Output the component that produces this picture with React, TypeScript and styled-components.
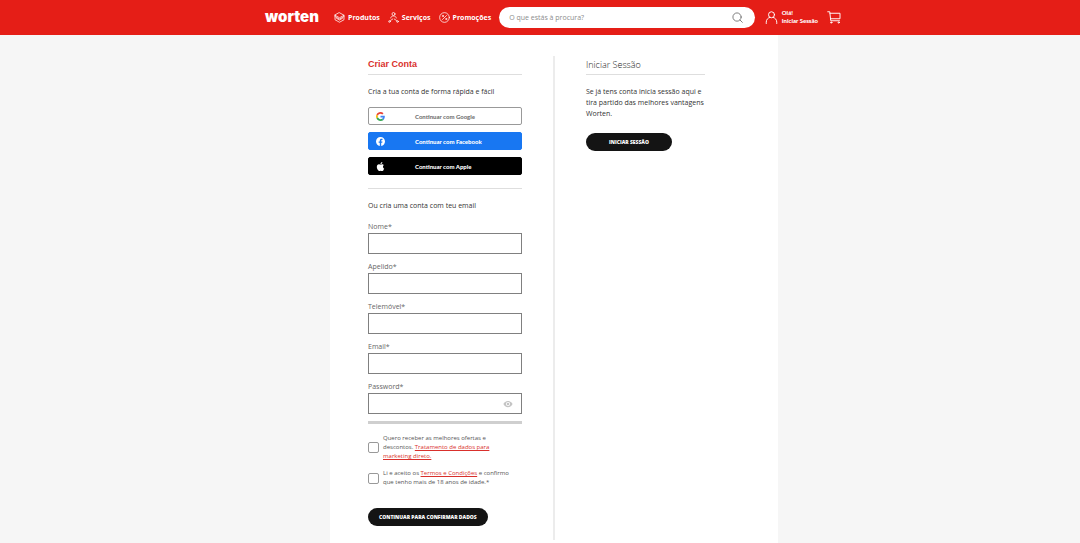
import React from "react";
import styled, { createGlobalStyle, css } from "styled-components";

const GlobalStyle = createGlobalStyle`
  * { box-sizing: border-box; }
  body {
    margin: 0;
    background: #f6f6f6;
    color: #333;
    font-family: "Open Sans", "Noto Sans", sans-serif;
    font-size: 7px;
    line-height: 11px;
  }
  h1, h2, p { margin: 0; }
  button, input { font-family: inherit; }
`;

const Page = styled.div`
  min-height: 100vh;
  display: flex;
  flex-direction: column;
`;

const Header = styled.header`
  background: #e51e17;
  color: #fff;
  padding-left: 28px;
`;

const HeaderInner = styled.div`
  display: flex;
  align-items: center;
  max-width: 578px;
  height: 35px;
  margin: 0 auto;
  padding: 0 2px 1px 0;
`;

const Logo = styled.a`
  width: 55px;
  margin-right: 14px;
  color: #fff;
  font-family: Inter, sans-serif;
  font-size: 15px;
  font-weight: 900;
  line-height: 20px;
  text-decoration: none;
`;

const Nav = styled.nav`
  display: flex;
  gap: 8px;
`;

const NavLink = styled.a`
  display: flex;
  align-items: center;
  gap: 3px;
  color: #fff;
  font-weight: 700;
  text-decoration: none;
`;

const Icon = styled.svg<{ $size: number }>`
  flex: none;
  display: block;
  width: ${(p) => p.$size}px;
  height: ${(p) => p.$size}px;
`;

const Search = styled.form`
  flex: 1;
  display: flex;
  align-items: center;
  height: 21px;
  margin-left: 8px;
  padding: 0 12px 0 10px;
  border-radius: 11px;
  background: #fff;
`;

const SearchInput = styled.input`
  flex: 1;
  min-width: 0;
  padding: 0;
  border: 0;
  outline: 0;
  background: transparent;
  font-size: 7px;
  &::placeholder { color: #8c8c8c; }
`;

const IconButton = styled.button`
  display: flex;
  padding: 0;
  border: 0;
  background: none;
  cursor: pointer;
`;

const compactBold = css`
  font-family: Lato, "Open Sans", sans-serif;
  font-size: 6px;
  font-weight: 900;
`;

const Account = styled.a`
  ${compactBold}
  display: flex;
  align-items: center;
  gap: 4px;
  margin: 0 9px 0 10px;
  color: #fff;
  line-height: 8px;
  white-space: nowrap;
  text-decoration: none;
`;

const Main = styled.main`
  flex: 1;
  display: flex;
  padding-left: 28px;
`;

const Panel = styled.div`
  display: grid;
  grid-template-columns: 1fr 1fr;
  align-items: start;
  width: 100%;
  max-width: 448px;
  margin: 0 auto;
  padding: 21px 36px 3px 38px;
  background: #fff;
`;

const SignUp = styled.section`
  padding: 0 31px 14px 0;
  border-right: 2px solid #ececec;
`;

const SignIn = styled.section`
  padding: 0 37px 0 31px;
`;

const titleBase = css`
  border-bottom: 1px solid #dedede;
  font-size: 9px;
`;

const SignUpTitle = styled.h1`
  ${titleBase}
  padding-bottom: 2px;
  color: #d9302c;
  font-family: "Liberation Sans", Arial, sans-serif;
  font-weight: 700;
  line-height: 16px;
`;

const SignInTitle = styled.h2`
  ${titleBase}
  color: #222;
  font-weight: 300;
  line-height: 18px;
`;

const Lead = styled.p`
  margin-top: 11px;
`;

const SocialList = styled.div`
  display: grid;
  gap: 7px;
  margin-top: 10px;
  padding-bottom: 13px;
  border-bottom: 1px solid #dedede;
`;

const SocialButton = styled.button<{ $bg: string; $fg: string; $border: string }>`
  ${compactBold}
  display: grid;
  grid-template-columns: 10px 1fr;
  align-items: center;
  gap: 29px;
  height: 18px;
  padding: 0 7px;
  border: 1px solid ${(p) => p.$border};
  border-radius: 2px;
  background: ${(p) => p.$bg};
  color: ${(p) => p.$fg};
  text-align: left;
  cursor: pointer;
`;

const Fields = styled.div`
  display: grid;
  gap: 7px;
  margin-top: 10px;
`;

const Field = styled.div`
  display: flex;
  flex-direction: column;
`;

const Label = styled.label`
  color: #666;
  line-height: 12px;
`;

const InputBox = styled.div`
  display: flex;
  align-items: center;
  height: 21px;
  padding: 0 8px;
  border: 1px solid #808080;
  background: #fff;
`;

const Input = styled.input`
  flex: 1;
  min-width: 0;
  padding: 0;
  border: 0;
  outline: 0;
  background: transparent;
  font-size: 7px;
`;

const Strength = styled.div`
  height: 3px;
  background: #cfcfcf;
`;

const Consents = styled.div`
  display: grid;
  gap: 8px;
  margin-top: 10px;
`;

const Consent = styled.div`
  display: flex;
  align-items: center;
  gap: 4px;
  padding-right: 5px;
  color: #555;
  font-size: 6px;
  line-height: 9px;
  a { color: #d9302c; }
`;

const Checkbox = styled.input`
  appearance: none;
  flex: none;
  width: 11px;
  height: 11px;
  margin: 0;
  border: 1px solid #999;
  border-radius: 2px;
  background: #fff;
  &:checked { background: #d9302c; }
`;

const PillButton = styled.button<{ $top: number; $side: number }>`
  display: block;
  height: 18px;
  margin-top: ${(p) => p.$top}px;
  padding: 0 ${(p) => p.$side}px;
  border: 0;
  border-radius: 9px;
  background: #141414;
  color: #fff;
  font-size: 5px;
  font-weight: 800;
  white-space: nowrap;
  cursor: pointer;
`;

const line = { fill: "none", stroke: "currentColor", strokeLinecap: "round", strokeLinejoin: "round" } as const;

const BoxIcon = () => (
  <Icon $size={11} viewBox="0 0 22 22" {...line} strokeWidth="1.5" aria-hidden>
    <path d="M11 1.500 20 6.500 11 11.500 2 6.500Z M2 6.500V15.500L11 20.500 20 15.500V6.500 M2 9 11 14 20 9 M5 12.500 11 16 17 12.500" />
  </Icon>
);

const ServicesIcon = () => (
  <Icon $size={11} viewBox="0 0 22 22" {...line} strokeWidth="1.5" aria-hidden>
    <circle cx="11" cy="4" r="3" />
    <path d="M5.500 12c.5-3 2.500-4 5.500-4s5 1 5.500 4M9.500 14 5 17M12.500 14 17 17" />
    <circle cx="3" cy="19" r="1.700" />
    <circle cx="19" cy="19" r="1.700" />
  </Icon>
);

const PromoIcon = () => (
  <Icon $size={11} viewBox="0 0 22 22" {...line} strokeWidth="1.5" aria-hidden>
    <circle cx="11" cy="11" r="9.700" />
    <path d="M7 15 15 7" />
    <circle cx="7.700" cy="8" r="1.200" />
    <circle cx="14.300" cy="14" r="1.200" />
  </Icon>
);

const SearchIcon = () => (
  <Icon $size={11} viewBox="0 0 24 24" {...line} stroke="#666" strokeWidth="1.800" aria-hidden>
    <circle cx="11" cy="11" r="9" />
    <path d="m17.500 17.500 5 5" />
  </Icon>
);

const UserIcon = () => (
  <Icon $size={13} viewBox="0 0 26 26" {...line} strokeWidth="1.900" aria-hidden>
    <circle cx="13" cy="7.500" r="6" />
    <path d="M2.500 25v-2.500c0-5 3-8.500 7-9.700M23.500 25v-2.500c0-5-3-8.500-7-9.700" />
  </Icon>
);

const CartIcon = () => (
  <Icon $size={14} viewBox="0 0 28 28" {...line} strokeWidth="1.900" aria-hidden>
    <path d="M1.500 3.500H5.500L7.500 21.500H25M6 6.500H26V17.500H7.300" />
    <circle cx="8.500" cy="25" r="1.300" />
    <circle cx="23.500" cy="25" r="1.300" />
  </Icon>
);

const GoogleIcon = () => (
  <Icon $size={9} viewBox="0 0 48 48" aria-hidden>
    <path fill="#EA4335" d="M24 9.500c3.540 0 6.710 1.220 9.210 3.600l6.850-6.850C35.900 2.380 30.470 0 24 0 14.620 0 6.510 5.380 2.560 13.220l7.980 6.190C12.430 13.720 17.740 9.500 24 9.500z" />
    <path fill="#4285F4" d="M46.980 24.550c0-1.570-.15-3.090-.38-4.550H24v9.020h12.940c-.58 2.960-2.260 5.480-4.780 7.180l7.730 6c4.510-4.180 7.090-10.360 7.090-17.650z" />
    <path fill="#FBBC05" d="M10.530 28.590c-.48-1.450-.76-2.990-.76-4.590s.27-3.140.76-4.590l-7.980-6.190C.92 16.460 0 20.120 0 24c0 3.880.92 7.540 2.560 10.780l7.970-6.190z" />
    <path fill="#34A853" d="M24 48c6.480 0 11.930-2.130 15.890-5.810l-7.730-6c-2.150 1.450-4.920 2.300-8.160 2.300-6.260 0-11.570-4.220-13.470-9.910l-7.980 6.190C6.510 42.620 14.620 48 24 48z" />
  </Icon>
);

const FacebookIcon = () => (
  <Icon $size={9} viewBox="0 0 24 24" fill="#fff" aria-hidden>
    <path d="M24 12.070C24 5.410 18.630 0 12 0S0 5.410 0 12.070C0 18.100 4.390 23.090 10.130 24v-8.440H7.080v-3.490h3.050V9.410c0-3.020 1.790-4.690 4.530-4.690 1.310 0 2.690.24 2.690.24v2.970h-1.520c-1.490 0-1.960.93-1.960 1.890v2.250h3.330l-.53 3.490h-2.800V24C19.610 23.090 24 18.100 24 12.070z" />
  </Icon>
);

const AppleIcon = () => (
  <Icon $size={9} viewBox="0 0 24 24" fill="#fff" aria-hidden>
    <path d="M12.150 6.900c-.95 0-2.420-1.080-3.960-1.040-2.040.03-3.910 1.180-4.960 3.010-2.120 3.680-.55 9.100 1.520 12.090 1.010 1.450 2.210 3.090 3.790 3.040 1.520-.07 2.090-.99 3.940-.99 1.830 0 2.350.99 3.960.95 1.640-.03 2.680-1.480 3.680-2.950 1.160-1.690 1.640-3.320 1.660-3.410-.04-.01-3.180-1.220-3.220-4.860-.03-3.040 2.480-4.490 2.600-4.560-1.430-2.090-3.620-2.320-4.390-2.380-2-.16-3.680 1.090-4.620 1.090zM15.530 3.830c.84-1.010 1.400-2.430 1.250-3.830-1.210.05-2.660.81-3.530 1.820-.78.900-1.450 2.340-1.270 3.710 1.340.1 2.720-.69 3.560-1.700z" />
  </Icon>
);

const EyeIcon = () => (
  <Icon $size={10} viewBox="0 0 24 24" aria-hidden>
    <path fill="#c4c4c4" fillRule="evenodd" d="M12 4.500C7 4.500 2.730 7.610 1 12c1.730 4.390 6 7.500 11 7.500s9.270-3.110 11-7.500c-1.730-4.390-6-7.500-11-7.500zM12 17a5 5 0 1 1 0-10 5 5 0 0 1 0 10zm0-8a3 3 0 1 0 0 6 3 3 0 0 0 0-6z" />
  </Icon>
);

const navItems = [
  { text: "Produtos", Glyph: BoxIcon },
  { text: "Serviços", Glyph: ServicesIcon },
  { text: "Promoções", Glyph: PromoIcon },
];

const socials = [
  { text: "Continuar com Google", Glyph: GoogleIcon, bg: "#fff", fg: "#757575", border: "#999" },
  { text: "Continuar com Facebook", Glyph: FacebookIcon, bg: "#1877f2", fg: "#fff", border: "#1877f2" },
  { text: "Continuar com Apple", Glyph: AppleIcon, bg: "#000", fg: "#fff", border: "#000" },
];

const fields = [
  { id: "nome", text: "Nome*", type: "text" },
  { id: "apelido", text: "Apelido*", type: "text" },
  { id: "telemovel", text: "Telemóvel*", type: "tel" },
  { id: "email", text: "Email*", type: "email" },
  { id: "password", text: "Password*", type: "password" },
];

export default function App() {
  return (
    <Page>
      <GlobalStyle />
      <Header>
        <HeaderInner>
          <Logo href="#">worten</Logo>
          <Nav>
            {navItems.map(({ text, Glyph }) => (
              <NavLink href="#" key={text}>
                <Glyph />
                {text}
              </NavLink>
            ))}
          </Nav>
          <Search onSubmit={(e) => e.preventDefault()}>
            <SearchInput type="search" aria-label="Pesquisar" placeholder="O que estás à procura?" />
            <IconButton type="submit" aria-label="Pesquisar">
              <SearchIcon />
            </IconButton>
          </Search>
          <Account href="#">
            <UserIcon />
            <span>
              Olá!
              <br />
              Iniciar Sessão
            </span>
          </Account>
          <NavLink href="#" aria-label="Carrinho">
            <CartIcon />
          </NavLink>
        </HeaderInner>
      </Header>
      <Main>
        <Panel>
          <SignUp>
            <SignUpTitle>Criar Conta</SignUpTitle>
            <Lead>Cria a tua conta de forma rápida e fácil</Lead>
            <SocialList>
              {socials.map(({ text, Glyph, bg, fg, border }) => (
                <SocialButton type="button" key={text} $bg={bg} $fg={fg} $border={border}>
                  <Glyph />
                  <span>{text}</span>
                </SocialButton>
              ))}
            </SocialList>
            <Lead>Ou cria uma conta com teu email</Lead>
            <form onSubmit={(e) => e.preventDefault()}>
              <Fields>
                {fields.map(({ id, text, type }) => (
                  <Field key={id}>
                    <Label htmlFor={id}>{text}</Label>
                    <InputBox>
                      <Input id={id} type={type} />
                      {type === "password" && (
                        <IconButton type="button" aria-label="Mostrar password">
                          <EyeIcon />
                        </IconButton>
                      )}
                    </InputBox>
                  </Field>
                ))}
                <Strength />
              </Fields>
              <Consents>
                <Consent>
                  <Checkbox type="checkbox" id="ofertas" />
                  <label htmlFor="ofertas">
                    Quero receber as melhores ofertas e descontos. <a href="#">Tratamento de dados para marketing direto.</a>
                  </label>
                </Consent>
                <Consent>
                  <Checkbox type="checkbox" id="termos" />
                  <label htmlFor="termos">
                    Li e aceito os <a href="#">Termos e Condições</a> e confirmo que tenho mais de 18 anos de idade.*
                  </label>
                </Consent>
              </Consents>
              <PillButton type="submit" $top={21} $side={11}>
                CONTINUAR PARA CONFIRMAR DADOS
              </PillButton>
            </form>
          </SignUp>
          <SignIn>
            <SignInTitle>Iniciar Sessão</SignInTitle>
            <Lead>Se já tens conta inicia sessão aqui e tira partido das melhores vantagens Worten.</Lead>
            <PillButton type="button" $top={14} $side={23}>
              INICIAR SESSÃO
            </PillButton>
          </SignIn>
        </Panel>
      </Main>
    </Page>
  );
}
